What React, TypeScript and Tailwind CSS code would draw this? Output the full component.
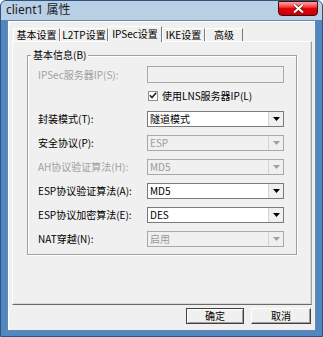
import React from "react";

const cjk = '"Noto Sans CJK SC", "Noto Sans", sans-serif';

const tabs = [
  { label: "基本设置", w: "w-[47px]" },
  { label: "L2TP设置", w: "w-[48px]" },
  { label: "IPSec设置", w: "w-[54px]", active: true },
  { label: "IKE设置", w: "w-[43px]" },
  { label: "高级", w: "w-[38px]" },
];

function Arrow({ disabled }: { disabled?: boolean }) {
  return (
    <div className="w-[15px] h-full flex items-center justify-center bg-[#f0f0f0] border-l border-[#d4d4d4]">
      <svg width="7" height="4" viewBox="0 0 7 4">
        <path d="M0 0h7L3.5 4z" fill={disabled ? "#a0a0a0" : "#000"} />
      </svg>
    </div>
  );
}

function Select({ value, disabled }: { value: string; disabled?: boolean }) {
  return (
    <div
      className={`w-[137px] h-[16px] flex items-stretch border ${
        disabled ? "border-[#a8a8a8] bg-[#f0f0f0] text-[#9a9a9a]" : "border-[#7a7a7a] bg-white text-black"
      }`}
    >
      <div className="flex-1 flex items-center pl-[2px] leading-none">{value}</div>
      <Arrow disabled={disabled} />
    </div>
  );
}

function Row({
  label,
  value,
  disabled,
  labelDisabled,
  className = "",
}: {
  label: string;
  value: string;
  disabled?: boolean;
  labelDisabled?: boolean;
  className?: string;
}) {
  return (
    <div className={`flex items-center ${className}`}>
      <div className={`w-[109px] leading-none whitespace-nowrap ${labelDisabled ? "text-[#a0a0a0]" : "text-black"}`}>{label}</div>
      <Select value={value} disabled={disabled} />
    </div>
  );
}

export default function App() {
  return (
    <div
      className="w-[323px] h-[337px] flex flex-col rounded-t-[6px] border border-[rgb(47,85,127)] bg-[rgb(79,135,194)] overflow-hidden"
      style={{ fontFamily: cjk }}
    >
      <div className="h-[19px] flex items-start justify-between bg-[rgb(185,207,230)]">
        <div className="pl-[5px] pt-[3px] text-[12px] leading-none text-[#1b1b1b]" style={{ fontFamily: '"Noto Sans", "Noto Sans CJK SC", sans-serif' }}>
          client1 属性
        </div>
        <div className="mr-[4px] w-[40px] h-[15px] rounded-b-[4px] border border-red-950 bg-linear-to-b from-red-300 via-red-600 to-red-700 flex items-center justify-center">
          <svg width="11" height="9" viewBox="0 0 11 9">
            <path d="M1 0.5L10 8.5M10 0.5L1 8.5" stroke="#5a1a12" strokeWidth="3.2" />
            <path d="M1 0.5L10 8.5M10 0.5L1 8.5" stroke="#fff" strokeWidth="2" />
          </svg>
        </div>
      </div>

      <div className="mx-[6px] mb-[5px] flex-1 flex flex-col border border-[rgb(110,135,165)] bg-[#f0f0f0] shadow-[inset_1px_1px_0_#fff] text-[10px]">
        <div className="pl-[4px] pr-[3px] pt-[5px] flex flex-col">
          <div className="flex items-end h-[15px] pl-[1px]">
            {tabs.map((t) =>
              t.active ? (
                <div
                  key={t.label}
                  className={`${t.w} h-[16px] -mb-px relative z-10 flex items-start justify-center pt-[2px] bg-[#f0f0f0] border-t border-l border-white border-r border-r-[#7a7a7a] leading-none whitespace-nowrap`}
                >
                  {t.label}
                </div>
              ) : (
                <div
                  key={t.label}
                  className={`${t.w} h-[13px] flex items-center justify-center bg-[#f0f0f0] border-t border-l border-white border-r border-r-[#7a7a7a] leading-none whitespace-nowrap`}
                >
                  {t.label}
                </div>
              )
            )}
          </div>

          <div className="h-[264px] border-t border-l border-white border-r border-r-[#a0a0a0] border-b border-b-[#6a6a6a] shadow-[inset_-1px_-1px_0_#d8d8d8] px-[14px] pt-[9px]">
            <div className="relative border border-[#a0a0a0] shadow-[1px_1px_0_#fff,inset_1px_1px_0_#fff] pl-[10px] pr-[11px] pt-[10px] pb-[7px] h-[200px] mt-[4px]">
              <div className="absolute -top-[6px] left-[3px] px-[2px] bg-[#f0f0f0] leading-none text-black">基本信息(B)</div>

              <div className="flex items-center">
                <div className="w-[109px] leading-none text-[#a0a0a0]">IPSec服务器IP(S):</div>
                <div className="w-[137px] h-[17px] border border-[#a8a8a8] bg-[#f0f0f0]" />
              </div>

              <div className="flex items-center mt-[6px] h-[13px] pl-[110px]">
                <div className="w-[10px] h-[10px] border border-[#8e8f8f] bg-white flex items-center justify-center">
                  <svg width="8" height="7" viewBox="0 0 8 7">
                    <path d="M0.8 3.2L3 5.5L7.2 0.8" stroke="#222" strokeWidth="1.6" fill="none" />
                  </svg>
                </div>
                <div className="ml-[4px] leading-none text-black">使用LNS服务器IP(L)</div>
              </div>

              <Row className="mt-[9px]" label="封装模式(T):" value="隧道模式" />
              <Row className="mt-[8px]" label="安全协议(P):" value="ESP" disabled />
              <Row className="mt-[8px]" label="AH协议验证算法(H):" value="MD5" disabled labelDisabled />
              <Row className="mt-[8px]" label="ESP协议验证算法(A):" value="MD5" />
              <Row className="mt-[8px]" label="ESP协议加密算法(E):" value="DES" />
              <Row className="mt-[8px]" label="NAT穿越(N):" value="启用" disabled />
            </div>
          </div>

          <div className="flex justify-end gap-[7px] mt-[3px] pr-[1px]">
            <div className="w-[58px] h-[16px] border border-[#404040] bg-[#f0f0f0] shadow-[inset_1px_1px_0_#fff,inset_-1px_-1px_0_#a0a0a0] flex items-center justify-center leading-none text-black">
              确定
            </div>
            <div className="w-[60px] h-[16px] border border-t-white border-l-white border-r-[#404040] border-b-[#404040] bg-[#f0f0f0] shadow-[inset_-1px_-1px_0_#a0a0a0] flex items-center justify-center leading-none text-black">
              取消
            </div>
          </div>
        </div>
      </div>
    </div>
  );
}
